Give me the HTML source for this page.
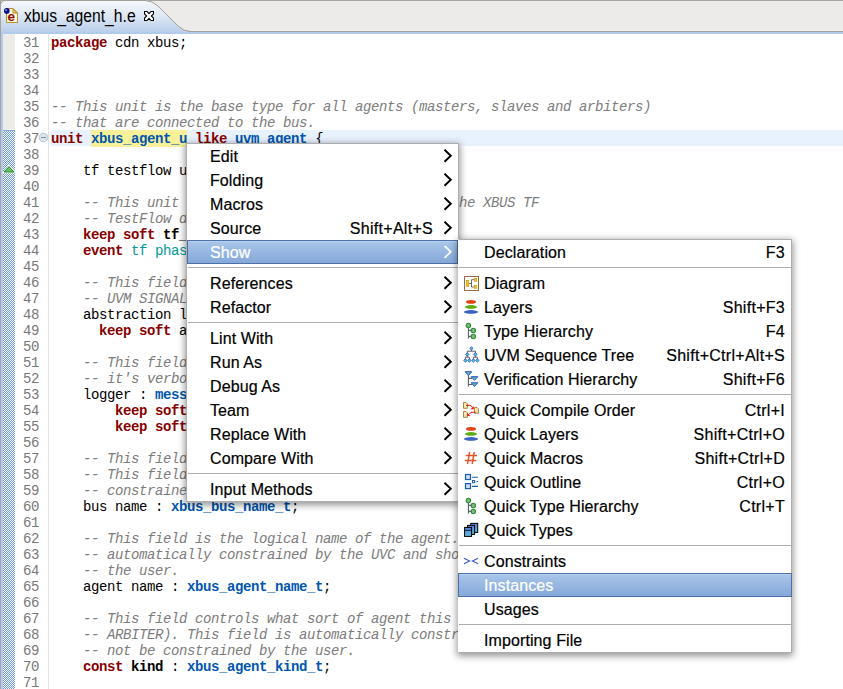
<!DOCTYPE html><html><head><meta charset="utf-8"><style>
*{margin:0;padding:0;box-sizing:border-box}
html,body{width:843px;height:689px;overflow:hidden;background:#fff}
body{position:relative;font-family:"Liberation Sans",sans-serif}
#tabbar{position:absolute;left:0;top:0;width:843px;height:34px;background:#ecebe9}
#editor{position:absolute;left:0;top:34px;width:843px;height:655px;background:#fff}
.lbord{position:absolute;left:0;top:0;width:1px;height:689px;background:#a7a39d}
.lblue{position:absolute;left:1px;top:34px;width:2px;height:655px;background:#b2caec}
.ruler{position:absolute;left:3px;top:34px;width:12px;height:96px;background:#ecebea}
.checker{position:absolute;left:3px;top:130px;width:12px;height:559px}
.gsep{position:absolute;left:48px;top:34px;width:1px;height:655px;background:#e3e3e3}
.curline{position:absolute;left:51px;top:130px;width:792px;height:16px;background:#e8f2fe}
.ln{position:absolute;left:15px;width:24px;height:16px;padding-top:1px;text-align:right;font-family:"Liberation Mono",monospace;font-size:14px;letter-spacing:-0.4px;line-height:16px;color:#787878;white-space:pre}
.cl{position:absolute;left:51px;height:16px;padding-top:1px;font-family:"Liberation Mono",monospace;font-size:14px;letter-spacing:-0.4px;line-height:16px;color:#000;white-space:pre}
.kw{color:#880000;font-weight:bold}
.ty{color:#0056b0;font-weight:bold}
.occ{color:#0056b0;font-weight:bold;background:#f9f19a}
.cm{color:#7c7c7c;font-style:italic}
.nb{font-weight:bold}
.te{color:#00999a}
.menu{position:absolute;background:#fff;border:1px solid #adadad;box-shadow:0 2px 7px 1px rgba(0,0,0,0.42)}
.mi{position:absolute;left:0;right:0;height:24px;font-size:16px;line-height:24px;color:#000;white-space:pre;letter-spacing:0.1px;-webkit-text-stroke:0.2px currentColor}
.m2 .mi.hl{left:-1px;right:-1px}
.mi.hl{background:linear-gradient(#abc7ea,#83a7d8);box-shadow:inset 0 0 0 1px #4b71a8, inset 0 2px 0 0 #b6d0f0;color:#fff}
.lbl{position:absolute;top:1px}
.m1 .lbl{left:23px}
.m2 .lbl{left:25px}
.m2 .mi.hl .lbl{left:26px}
.sc{position:absolute;right:25px;top:1px;letter-spacing:0.28px}
.m2 .sc{right:6px}
.arr{position:absolute;left:256px;top:4px}
.m1 .mi.hl{right:0}
.ic{position:absolute;left:5px;top:5px;width:16px;height:16px}
.ic svg{display:block;overflow:visible}
.sep{position:absolute;left:0;right:0;height:1px;background:#acacac}
.m1 .sep{left:1px}
.m2{border-left-color:#fff}
</style></head><body><div id="tabbar"><svg style="position:absolute;left:0;top:0" width="843" height="34" viewBox="0 0 843 34">
<defs><linearGradient id="tabg" x1="0" y1="0" x2="0" y2="1"><stop offset="0" stop-color="#f6f8fc"/><stop offset="0.45" stop-color="#dfe8f4"/><stop offset="1" stop-color="#b5cbea"/></linearGradient></defs>
<rect x="0" y="0" width="843" height="1" fill="#a9a6a1"/>
<rect x="0" y="30" width="843" height="1" fill="#f4f3f1"/>
<rect x="0" y="31" width="843" height="1" fill="#9f9b96"/>
<path d="M0.5 34V6Q0.5 0.5 6 0.5H145Q152 0.5 158 6L178 26Q183.5 31.5 191 31.5H843V34Z" fill="url(#tabg)" stroke="none"/>
<path d="M0.5 34V6Q0.5 0.5 6 0.5H145Q152 0.5 158 6L178 26Q183.5 31.5 191 31.5H843" fill="none" stroke="#a29e98" stroke-width="1"/>
<rect x="1" y="32" width="842" height="2" fill="#b3cbeb"/>
</svg><svg style="position:absolute;left:0;top:0" width="22" height="26" viewBox="0 0 22 26">
<path d="M6.5 8.5H13L17.5 13V22.5H6.5Z" fill="#fff8d8" stroke="#b8922e"/>
<path d="M13 8.5V13H17.5Z" fill="#e2c070" stroke="#b8922e" stroke-linejoin="round"/>
<text x="7.6" y="21.2" font-family="Liberation Sans" font-weight="bold" font-size="13.5" fill="#8c0a0a">e</text>
<circle cx="6.8" cy="10.9" r="2.8" fill="#0a0a8c"/>
<circle cx="6.1" cy="10.2" r="1.1" fill="#6a78b8"/>
</svg><div style="position:absolute;left:24px;top:7px;font-size:15.7px;line-height:20px;color:#000;white-space:pre;transform:scaleY(1.13);transform-origin:0 15px">xbus_agent_h.e</div><svg style="position:absolute;left:144px;top:11px" width="10" height="10" viewBox="0 0 10 10">
<path d="M0.5 0.5H3L5 2.7L7 0.5H9.5V3L7.3 5L9.5 7V9.5H7L5 7.3L3 9.5H0.5V7L2.7 5L0.5 3Z" fill="#fff" stroke="#000" stroke-width="1.1" stroke-linejoin="miter"/>
</svg></div>
<div class="lbord"></div><div class="lblue"></div><div class="ruler"></div><svg class="checker" width="12" height="559" shape-rendering="crispEdges"><defs><pattern id="ck" width="2" height="2" patternUnits="userSpaceOnUse"><rect width="2" height="2" fill="#fbfaf6"/><rect width="1" height="1" fill="#6a9be0"/><rect x="1" y="1" width="1" height="1" fill="#6a9be0"/></pattern></defs><rect width="12" height="559" fill="url(#ck)"/><rect width="12" height="1" fill="#7aa6e4"/></svg><div style="position:absolute;left:3px;top:129px;width:12px;height:1px;background:#f6f2ea"></div>
<div class="gsep"></div>
<div class="curline"></div>
<div style="position:absolute;left:91px;top:130px;width:96px;height:16px;background:#f9f19a"></div>
<svg style="position:absolute;left:38px;top:132px" width="11" height="11" viewBox="0 0 11 11">
<circle cx="5.5" cy="5.5" r="4.3" fill="#dbe5ef" stroke="#b8c4d0" stroke-width="1"/>
<path d="M3 5.5H8" stroke="#7a8290" stroke-width="0.9"/></svg><svg style="position:absolute;left:2px;top:165px" width="14" height="9" viewBox="0 0 14 9">
<path d="M7 -0.6L14 8.3H0Z" fill="#fff"/>
<path d="M7 1.6L12 7H2Z" fill="#6cc060" stroke="#108a20" stroke-width="1"/></svg>
<div class="ln" style="top:34px">31</div>
<div class="cl" style="top:34px"><span class="kw">package</span> cdn xbus;</div>
<div class="ln" style="top:50px">32</div>
<div class="ln" style="top:66px">33</div>
<div class="ln" style="top:82px">34</div>
<div class="ln" style="top:98px">35</div>
<div class="cl" style="top:98px"><span class="cm">-- This unit is the base type for all agents (masters, slaves and arbiters)</span></div>
<div class="ln" style="top:114px">36</div>
<div class="cl" style="top:114px"><span class="cm">-- that are connected to the bus.</span></div>
<div class="ln" style="top:130px">37</div>
<div class="cl" style="top:130px"><span class="kw">unit</span> <span class="occ">xbus_agent_u</span> <span class="kw">like</span> <span class="ty">uvm_agent</span> {</div>
<div class="ln" style="top:146px">38</div>
<div class="ln" style="top:162px">39</div>
<div class="cl" style="top:162px">    tf testflow unit : xbus_tf_unit;</div>
<div class="ln" style="top:178px">40</div>
<div class="ln" style="top:194px">41</div>
<div class="cl" style="top:194px"><span class="cm">    -- This unit is registered with the testflow o he XBUS TF</span></div>
<div class="ln" style="top:210px">42</div>
<div class="cl" style="top:210px"><span class="cm">    -- TestFlow domain of the agent.</span></div>
<div class="ln" style="top:226px">43</div>
<div class="cl" style="top:226px">    <span class="kw">keep soft</span> <span class="nb">tf_domain</span> == XBUS_TF;</div>
<div class="ln" style="top:242px">44</div>
<div class="cl" style="top:242px">    <span class="kw">event</span> <span class="te">tf phase clock is only @sys.any;</span></div>
<div class="ln" style="top:258px">45</div>
<div class="ln" style="top:274px">46</div>
<div class="cl" style="top:274px"><span class="cm">    -- This field is the abstraction level of the agent.</span></div>
<div class="ln" style="top:290px">47</div>
<div class="cl" style="top:290px"><span class="cm">    -- UVM SIGNAL level is the default.</span></div>
<div class="ln" style="top:306px">48</div>
<div class="cl" style="top:306px">    abstraction level : uvm_abstraction_level_t;</div>
<div class="ln" style="top:322px">49</div>
<div class="cl" style="top:322px">      <span class="kw">keep soft</span> abstraction level == UVM_SIGNAL;</div>
<div class="ln" style="top:338px">50</div>
<div class="ln" style="top:354px">51</div>
<div class="cl" style="top:354px"><span class="cm">    -- This field is the message logger of the agent.</span></div>
<div class="ln" style="top:370px">52</div>
<div class="cl" style="top:370px"><span class="cm">    -- it&#x27;s verbosity is set to NONE by default.</span></div>
<div class="ln" style="top:386px">53</div>
<div class="cl" style="top:386px">    logger : <span class="ty">message_logger</span> is instance;</div>
<div class="ln" style="top:402px">54</div>
<div class="cl" style="top:402px">        <span class="kw">keep soft</span> logger.verbosity == NONE;</div>
<div class="ln" style="top:418px">55</div>
<div class="cl" style="top:418px">        <span class="kw">keep soft</span> logger.tags == {NORMAL};</div>
<div class="ln" style="top:434px">56</div>
<div class="ln" style="top:450px">57</div>
<div class="cl" style="top:450px"><span class="cm">    -- This field is the logical name of the bus this agent</span></div>
<div class="ln" style="top:466px">58</div>
<div class="cl" style="top:466px"><span class="cm">    -- This field is automatically constrained by the UVC</span></div>
<div class="ln" style="top:482px">59</div>
<div class="cl" style="top:482px"><span class="cm">    -- constrained by the user.</span></div>
<div class="ln" style="top:498px">60</div>
<div class="cl" style="top:498px">    bus name : <span class="ty">xbus_bus_name_t</span>;</div>
<div class="ln" style="top:514px">61</div>
<div class="ln" style="top:530px">62</div>
<div class="cl" style="top:530px"><span class="cm">    -- This field is the logical name of the agent. This field is</span></div>
<div class="ln" style="top:546px">63</div>
<div class="cl" style="top:546px"><span class="cm">    -- automatically constrained by the UVC and should not be</span></div>
<div class="ln" style="top:562px">64</div>
<div class="cl" style="top:562px"><span class="cm">    -- the user.</span></div>
<div class="ln" style="top:578px">65</div>
<div class="cl" style="top:578px">    agent name : <span class="ty">xbus_agent_name_t</span>;</div>
<div class="ln" style="top:594px">66</div>
<div class="ln" style="top:610px">67</div>
<div class="cl" style="top:610px"><span class="cm">    -- This field controls what sort of agent this is (MASTER,</span></div>
<div class="ln" style="top:626px">68</div>
<div class="cl" style="top:626px"><span class="cm">    -- ARBITER). This field is automatically constrained by the</span></div>
<div class="ln" style="top:642px">69</div>
<div class="cl" style="top:642px"><span class="cm">    -- not be constrained by the user.</span></div>
<div class="ln" style="top:658px">70</div>
<div class="cl" style="top:658px">    <span class="kw">const</span> <span class="nb">kind</span> : <span class="ty">xbus_agent_kind_t</span>;</div>
<div class="ln" style="top:674px">71</div>
<div class="menu m1" style="left:186px;top:143px;width:273px;height:359px"><div class="mi" style="top:0px"><span class="lbl">Edit</span><svg class="arr" width="10" height="16" viewBox="0 0 10 16"><path d="M1.5 1.8L7.8 7.8L1.5 13.8" stroke="#000" stroke-width="1.9" fill="none"/></svg></div>
<div class="mi" style="top:24px"><span class="lbl">Folding</span><svg class="arr" width="10" height="16" viewBox="0 0 10 16"><path d="M1.5 1.8L7.8 7.8L1.5 13.8" stroke="#000" stroke-width="1.9" fill="none"/></svg></div>
<div class="mi" style="top:48px"><span class="lbl">Macros</span><svg class="arr" width="10" height="16" viewBox="0 0 10 16"><path d="M1.5 1.8L7.8 7.8L1.5 13.8" stroke="#000" stroke-width="1.9" fill="none"/></svg></div>
<div class="mi" style="top:72px"><span class="lbl">Source</span><span class="sc">Shift+Alt+S</span><svg class="arr" width="10" height="16" viewBox="0 0 10 16"><path d="M1.5 1.8L7.8 7.8L1.5 13.8" stroke="#000" stroke-width="1.9" fill="none"/></svg></div>
<div class="mi hl" style="top:96px"><span class="lbl">Show</span><svg class="arr" width="10" height="16" viewBox="0 0 10 16"><path d="M1.5 1.8L7.8 7.8L1.5 13.8" stroke="#fff" stroke-width="1.7" fill="none"/></svg></div>
<div class="sep" style="top:123px"></div>
<div class="mi" style="top:127px"><span class="lbl">References</span><svg class="arr" width="10" height="16" viewBox="0 0 10 16"><path d="M1.5 1.8L7.8 7.8L1.5 13.8" stroke="#000" stroke-width="1.9" fill="none"/></svg></div>
<div class="mi" style="top:151px"><span class="lbl">Refactor</span><svg class="arr" width="10" height="16" viewBox="0 0 10 16"><path d="M1.5 1.8L7.8 7.8L1.5 13.8" stroke="#000" stroke-width="1.9" fill="none"/></svg></div>
<div class="sep" style="top:178px"></div>
<div class="mi" style="top:182px"><span class="lbl">Lint With</span><svg class="arr" width="10" height="16" viewBox="0 0 10 16"><path d="M1.5 1.8L7.8 7.8L1.5 13.8" stroke="#000" stroke-width="1.9" fill="none"/></svg></div>
<div class="mi" style="top:206px"><span class="lbl">Run As</span><svg class="arr" width="10" height="16" viewBox="0 0 10 16"><path d="M1.5 1.8L7.8 7.8L1.5 13.8" stroke="#000" stroke-width="1.9" fill="none"/></svg></div>
<div class="mi" style="top:230px"><span class="lbl">Debug As</span><svg class="arr" width="10" height="16" viewBox="0 0 10 16"><path d="M1.5 1.8L7.8 7.8L1.5 13.8" stroke="#000" stroke-width="1.9" fill="none"/></svg></div>
<div class="mi" style="top:254px"><span class="lbl">Team</span><svg class="arr" width="10" height="16" viewBox="0 0 10 16"><path d="M1.5 1.8L7.8 7.8L1.5 13.8" stroke="#000" stroke-width="1.9" fill="none"/></svg></div>
<div class="mi" style="top:278px"><span class="lbl">Replace With</span><svg class="arr" width="10" height="16" viewBox="0 0 10 16"><path d="M1.5 1.8L7.8 7.8L1.5 13.8" stroke="#000" stroke-width="1.9" fill="none"/></svg></div>
<div class="mi" style="top:302px"><span class="lbl">Compare With</span><svg class="arr" width="10" height="16" viewBox="0 0 10 16"><path d="M1.5 1.8L7.8 7.8L1.5 13.8" stroke="#000" stroke-width="1.9" fill="none"/></svg></div>
<div class="sep" style="top:329px"></div>
<div class="mi" style="top:333px"><span class="lbl">Input Methods</span><svg class="arr" width="10" height="16" viewBox="0 0 10 16"><path d="M1.5 1.8L7.8 7.8L1.5 13.8" stroke="#000" stroke-width="1.9" fill="none"/></svg></div></div>
<div class="menu m2" style="left:458px;top:239px;width:334px;height:414px"><div class="mi" style="top:0px"><span class="lbl">Declaration</span><span class="sc">F3</span></div>
<div class="sep" style="top:27px"></div>
<div class="mi" style="top:31px"><span class="lbl">Diagram</span><span class="ic ic-diagram"><svg width="16" height="16" viewBox="0 0 16 16"><rect x="0.5" y="0.5" width="14" height="14" fill="#fff" stroke="#9a6a3e"/><path d="M5 7.5H7.5M10 3.7H7.5V11H10" stroke="#6a6a6a" fill="none"/><rect x="2.4" y="4.4" width="2.3" height="5.9" fill="#f2c830" stroke="#d0a010" stroke-width="0.8"/><rect x="10.4" y="2.4" width="2.3" height="2.9" fill="#f2c830" stroke="#d0a010" stroke-width="0.8"/><rect x="10.4" y="9.4" width="2.3" height="2.9" fill="#f2c830" stroke="#d0a010" stroke-width="0.8"/></svg></span></div>
<div class="mi" style="top:55px"><span class="lbl">Layers</span><span class="ic ic-layers"><svg width="16" height="16" viewBox="0 0 16 16"><ellipse cx="7" cy="1.9" rx="5" ry="1.8" fill="#e04412"/><ellipse cx="7" cy="6.9" rx="6" ry="1.8" fill="#5cac14"/><ellipse cx="7" cy="11.9" rx="7" ry="1.8" fill="#3a62c4"/></svg></span><span class="sc">Shift+F3</span></div>
<div class="mi" style="top:79px"><span class="lbl">Type Hierarchy</span><span class="ic ic-th"><svg width="16" height="16" viewBox="0 0 16 16"><path d="M4.4 4V14.6M4.4 6.4H8M4.4 12.4H8" stroke="#5a6070" stroke-width="1.1" fill="none"/><circle cx="4.4" cy="1.5" r="2.2" fill="#80bc70" stroke="#2a8a3c" stroke-width="1.1"/><circle cx="9.3" cy="6.5" r="2.2" fill="#80bc70" stroke="#2a8a3c" stroke-width="1.1"/><circle cx="9.3" cy="12.5" r="2.2" fill="#80bc70" stroke="#2a8a3c" stroke-width="1.1"/></svg></span><span class="sc">F4</span></div>
<div class="mi" style="top:103px"><span class="lbl">UVM Sequence Tree</span><span class="ic ic-uvm"><svg width="16" height="16" viewBox="0 0 16 16"><path d="M7.4 1V3.2M3.3 6.4V3.2H11.4V6.4M3.3 6.4V9.2M11.4 6.4V9.2M1.4 12.5V9.2H5.4V12.5M9.4 12.5V9.2H13.4V12.5" stroke="#5a6068" stroke-width="1" fill="none"/><g fill="#50c8d8" stroke="#3a58d0" stroke-width="0.9"><path d="M7.4 -1.2L9.1 0.4L7.4 2L5.7 0.4Z"/><path d="M3.3 4.7L5 6.4L3.3 8.1L1.6 6.4Z"/><path d="M11.4 4.7L13.1 6.4L11.4 8.1L9.7 6.4Z"/><path d="M1.4 10.8L3.1 12.5L1.4 14.2L-0.3 12.5Z"/><path d="M5.4 10.8L7.1 12.5L5.4 14.2L3.7 12.5Z"/><path d="M9.4 10.8L11.1 12.5L9.4 14.2L7.7 12.5Z"/><path d="M13.4 10.8L15.1 12.5L13.4 14.2L11.7 12.5Z"/></g></svg></span><span class="sc">Shift+Ctrl+Alt+S</span></div>
<div class="mi" style="top:127px"><span class="lbl">Verification Hierarchy</span><span class="ic ic-vh"><svg width="16" height="16" viewBox="0 0 16 16"><path d="M4.4 3V14.5M4.4 6.4H8M4.4 12.5H8" stroke="#5a6068" stroke-width="1.1" fill="none"/><g fill="#58c0b0" stroke="#2a4ed0" stroke-width="1" stroke-linejoin="round"><path d="M1.2 -0.3H7.8L4.5 3.3Z"/><path d="M7.2 4.7H13.8L10.5 8.3Z"/><path d="M7.2 10.8H13.8L10.5 14.4Z"/></g></svg></span><span class="sc">Shift+F6</span></div>
<div class="sep" style="top:154px"></div>
<div class="mi" style="top:158px"><span class="lbl">Quick Compile Order</span><span class="ic ic-qco"><svg width="16" height="16" viewBox="0 0 16 16" style="overflow:visible"><g fill="#f8e8b0" stroke="#9a7a30" stroke-width="0.9"><path d="M-0.5 -0.6H2L3.4 0.8V5.3H-0.5Z"/><path d="M10.5 4.4H13L14.4 5.8V10.3H10.5Z"/><path d="M-0.5 8.5H2L3.4 9.9V14.3H-0.5Z"/></g><path d="M2 2.3H6.5L8.6 4.6M11.7 9.3H7L5.2 11.3" stroke="#f01010" stroke-width="1" fill="none"/><path d="M9.8 3V6.3H6.6Z" fill="#f01010"/><path d="M3.2 9.7V13H6.4Z" fill="#f01010"/></svg></span><span class="sc">Ctrl+I</span></div>
<div class="mi" style="top:182px"><span class="lbl">Quick Layers</span><span class="ic ic-layers"><svg width="16" height="16" viewBox="0 0 16 16"><ellipse cx="7" cy="1.9" rx="5" ry="1.8" fill="#e04412"/><ellipse cx="7" cy="6.9" rx="6" ry="1.8" fill="#5cac14"/><ellipse cx="7" cy="11.9" rx="7" ry="1.8" fill="#3a62c4"/></svg></span><span class="sc">Shift+Ctrl+O</span></div>
<div class="mi" style="top:206px"><span class="lbl">Quick Macros</span><span class="ic ic-hash"><svg width="16" height="16" viewBox="0 0 16 16"><path d="M5.6 1L3.6 13M10.2 1L8.2 13M1.7 4.5H13M1 9.5H12.3" stroke="#e2532c" stroke-width="1.5" fill="none"/></svg></span><span class="sc">Shift+Ctrl+D</span></div>
<div class="mi" style="top:230px"><span class="lbl">Quick Outline</span><span class="ic ic-outline"><svg width="16" height="16" viewBox="0 0 16 16" style="overflow:visible"><rect x="1.5" y="-0.5" width="5" height="5" fill="#c8e0f8" stroke="#1a5ca8" stroke-width="1.2"/><rect x="1.5" y="8.6" width="5" height="5" fill="#c8e0f8" stroke="#1a5ca8" stroke-width="1.2"/><rect x="8.5" y="5.5" width="2.2" height="2.2" fill="#fff" stroke="#1a5ca8" stroke-width="1"/><path d="M8 2.3H14M12.5 6.5H14M8 11.4H14" stroke="#1a5ca8" stroke-width="1.1"/></svg></span><span class="sc">Ctrl+O</span></div>
<div class="mi" style="top:254px"><span class="lbl">Quick Type Hierarchy</span><span class="ic ic-th"><svg width="16" height="16" viewBox="0 0 16 16"><path d="M4.4 4V14.6M4.4 6.4H8M4.4 12.4H8" stroke="#5a6070" stroke-width="1.1" fill="none"/><circle cx="4.4" cy="1.5" r="2.2" fill="#80bc70" stroke="#2a8a3c" stroke-width="1.1"/><circle cx="9.3" cy="6.5" r="2.2" fill="#80bc70" stroke="#2a8a3c" stroke-width="1.1"/><circle cx="9.3" cy="12.5" r="2.2" fill="#80bc70" stroke="#2a8a3c" stroke-width="1.1"/></svg></span><span class="sc">Ctrl+T</span></div>
<div class="mi" style="top:278px"><span class="lbl">Quick Types</span><span class="ic ic-types"><svg width="16" height="16" viewBox="0 0 16 16" style="overflow:visible"><defs><linearGradient id="tg" x1="0" y1="0" x2="0" y2="1"><stop offset="0" stop-color="#5a7ee0"/><stop offset="1" stop-color="#5cc0d8"/></linearGradient></defs><g fill="url(#tg)" stroke="#000" stroke-width="1"><rect x="6.7" y="0.4" width="7" height="9"/><rect x="3.6" y="2.4" width="7" height="9"/><rect x="0.6" y="4.4" width="7" height="9"/></g><path d="M1 7.3H7.2" stroke="#000" stroke-width="0.8"/></svg></span></div>
<div class="sep" style="top:305px"></div>
<div class="mi" style="top:309px"><span class="lbl">Constraints</span><span class="ic ic-constr"><svg width="16" height="16" viewBox="0 0 16 16" style="overflow:visible"><path d="M0 4.3L5.6 7L0 9.7M14 4.3L8.4 7L14 9.7" stroke="#3a58c8" stroke-width="1.1" fill="none"/></svg></span></div>
<div class="mi hl" style="top:333px"><span class="lbl">Instances</span></div>
<div class="mi" style="top:357px"><span class="lbl">Usages</span></div>
<div class="sep" style="top:384px"></div>
<div class="mi" style="top:388px"><span class="lbl">Importing File</span></div></div>
</body></html>
